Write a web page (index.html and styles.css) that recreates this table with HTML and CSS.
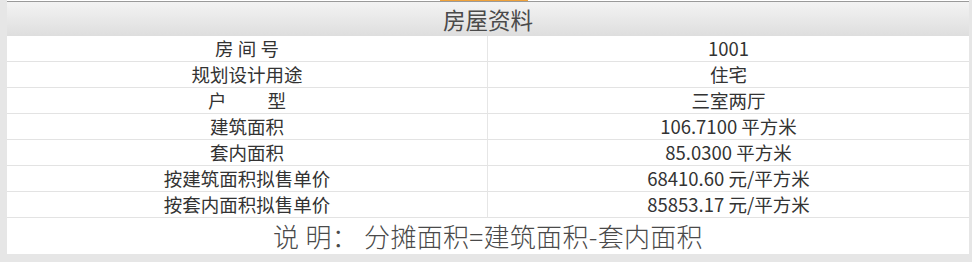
FILE: index.html
```html
<!DOCTYPE html>
<html lang="zh-CN">
<head>
<meta charset="utf-8">
<title>房屋资料</title>
<link rel="stylesheet" href="styles.css">
</head>
<body>
<div class="panel">
  <span class="marker"></span>
  <div class="header">房屋资料</div>
  <div class="grid">
    <div class="cell label">房 间 号</div><div class="cell value">1001</div>
    <div class="cell label">规划设计用途</div><div class="cell value">住宅</div>
    <div class="cell label">户　　 型</div><div class="cell value">三室两厅</div>
    <div class="cell label">建筑面积</div><div class="cell value">106.7100 平方米</div>
    <div class="cell label">套内面积</div><div class="cell value">85.0300 平方米</div>
    <div class="cell label">按建筑面积拟售单价</div><div class="cell value">68410.60 元/平方米</div>
    <div class="cell label">按套内面积拟售单价</div><div class="cell value">85853.17 元/平方米</div>
  </div>
  <div class="footer">说 明： 分摊面积=建筑面积-套内面积</div>
</div>
</body>
</html>
```

FILE: styles.css
```css
html, body {
  margin: 0;
  padding: 0;
}
body {
  background: #e6e6e6;
  font-family: "Noto Sans CJK SC", "Noto Sans", sans-serif;
  color: #333;
  width: 972px;
  height: 262px;
  overflow: hidden;
}
.panel {
  position: relative;
  margin: 0 3px 0 7px;
  background: #fff;
  padding-top: 1px;
  height: 253px;
  display: flex;
  flex-direction: column;
}
.marker {
  position: absolute;
  top: 0;
  left: 433px;
  width: 88px;
  height: 1px;
  background: #f0a23a;
}
.header {
  border-top: 1px solid #9a9a9a;
  height: 34px;
  background: linear-gradient(#f3f3f3, #dedede);
  display: flex;
  align-items: center;
  justify-content: center;
  font-size: 22.5px;
  color: #4a4a4a;
  line-height: 1;
}
.grid {
  display: grid;
  grid-template-columns: 481px 1fr;
}
.cell {
  height: 25px;
  border-bottom: 1px solid #e3e3e3;
  display: flex;
  align-items: center;
  justify-content: center;
  font-size: 18.5px;
  line-height: 1;
  white-space: pre;
}
.label {
  border-right: 1px solid #e6e6e6;
}
.footer {
  height: 36px;
  display: flex;
  align-items: center;
  justify-content: center;
  font-size: 26px;
  font-weight: 300;
  letter-spacing: 0.3px;
  color: #4a4a4a;
  line-height: 1;
  white-space: pre;
}
```
